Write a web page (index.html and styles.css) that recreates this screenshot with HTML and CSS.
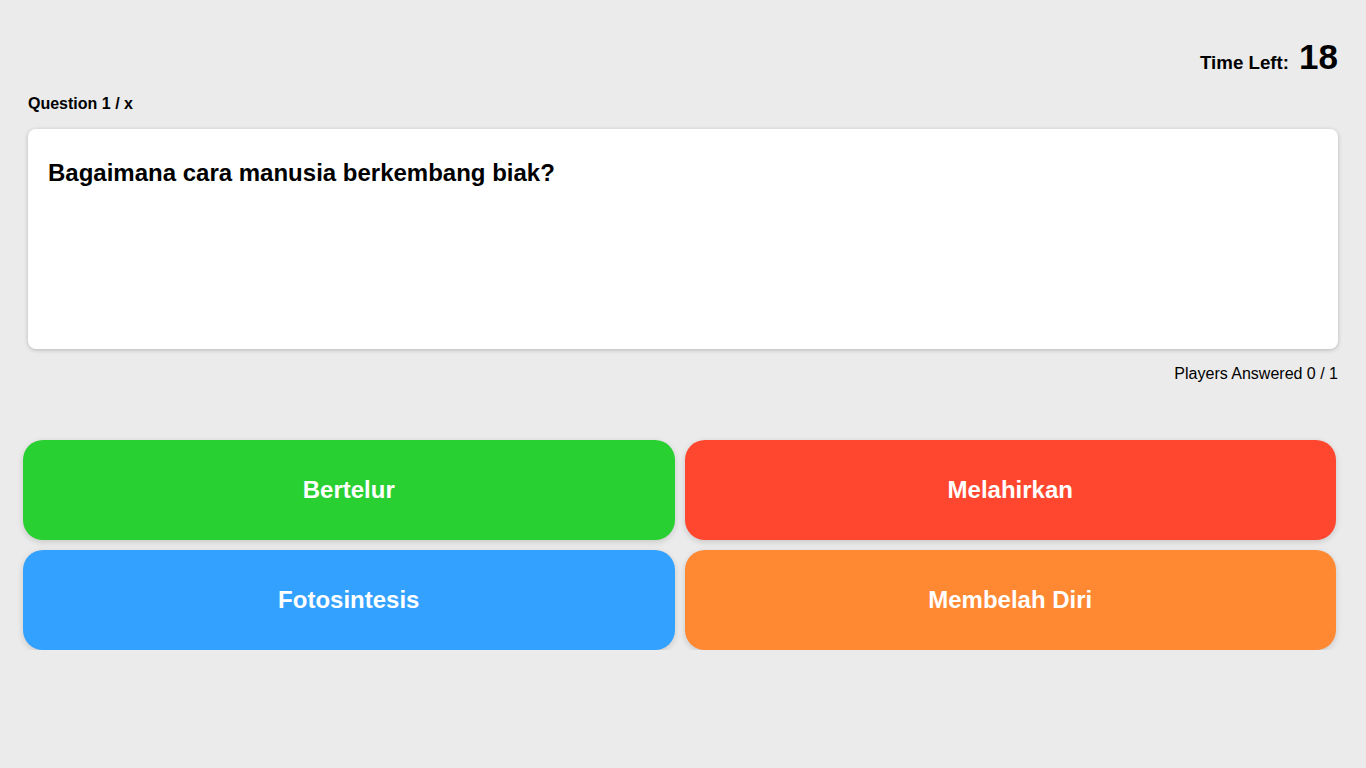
FILE: index.html
```html
<!DOCTYPE html>
<html lang="id">
<head>
<meta charset="utf-8">
<title>Quiz</title>
<link rel="stylesheet" href="styles.css">
</head>
<body>
<main class="page">
  <div class="timer">
    <span class="timer-label">Time Left:</span>
    <span class="timer-value">18</span>
  </div>
  <div class="question-label">Question 1 / x</div>
  <section class="question-card">
    <h2 class="question-text">Bagaimana cara manusia berkembang biak?</h2>
  </section>
  <div class="answered">Players Answered 0 / 1</div>
  <div class="answers">
    <button class="answer green">Bertelur</button>
    <button class="answer red">Melahirkan</button>
    <button class="answer blue">Fotosintesis</button>
    <button class="answer orange">Membelah Diri</button>
  </div>
</main>
</body>
</html>
```
FILE: styles.css
```css
html, body {
  margin: 0;
  padding: 0;
  background: #ebebeb;
  font-family: "Liberation Sans", Arial, sans-serif;
  color: #000;
}
.page {
  padding: 38px 28px 0 28px;
}
.timer {
  display: flex;
  justify-content: flex-end;
  align-items: baseline;
  gap: 10px;
  line-height: 37px;
}
.timer-label {
  font-size: 18.72px;
  font-weight: bold;
}
.timer-value {
  font-size: 35px;
  font-weight: bold;
}
.question-label {
  margin-top: 14px;
  font-size: 16px;
  font-weight: bold;
  line-height: 18px;
}
.question-card {
  margin-top: 16px;
  height: 220px;
  box-sizing: border-box;
  background: #fff;
  border-radius: 8px;
  box-shadow: 0 1px 4px rgba(0, 0, 0, 0.22);
  padding: 30px 20px 20px;
}
.question-text {
  margin: 0;
  font-size: 24px;
  font-weight: bold;
  line-height: 28px;
}
.answered {
  margin-top: 16px;
  text-align: right;
  font-size: 16px;
  line-height: 18px;
}
.answers {
  margin: 57px 2px 0 -5px;
  display: grid;
  grid-template-columns: 1fr 1fr;
  gap: 10px;
}
.answer {
  height: 100px;
  border: none;
  border-radius: 20px;
  color: #fff;
  font-family: "Liberation Sans", Arial, sans-serif;
  font-size: 24px;
  font-weight: bold;
  box-shadow: 0 2px 6px rgba(0, 0, 0, 0.15);
  cursor: pointer;
}
.green { background: #29d032; }
.red { background: #ff462e; }
.blue { background: #33a1ff; }
.orange { background: #ff8833; }
```
